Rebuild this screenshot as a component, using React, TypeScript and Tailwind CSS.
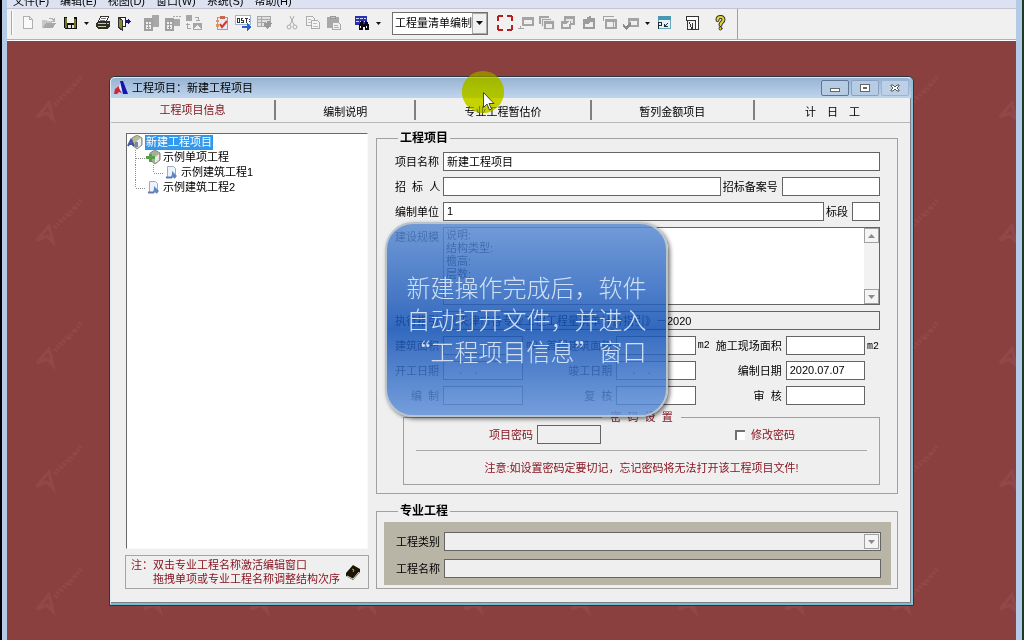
import type { ReactNode } from "react";

const menuItems = ["文件(F)", "编辑(E)", "视图(D)", "窗口(W)", "系统(S)", "帮助(H)"];

const inputClass =
  "block h-[19px] w-full min-w-0 rounded-none border border-[#646464] bg-white px-[3px] pb-[2px] text-[11px] leading-[15px] text-black outline-none";
const disabledClass =
  "block h-[19px] w-full min-w-0 rounded-none border border-[#646464] bg-[#efefef] px-[3px] pb-[2px] text-[11px] leading-[15px] text-black outline-none";

/* ---------- Toolbar icons ---------- */

const Icon = ({ children }: { children: ReactNode }) => (
  <svg width="16" height="16" viewBox="0 0 16 16" fill="none" shapeRendering="crispEdges">
    {children}
  </svg>
);

const NewIcon = () => (
  <Icon>
    <path d="M3.5 1.5h6l3 3v9h-9z" fill="#fafafa" stroke="#b0b0b0" />
    <path d="M9.5 1.5v3h3" stroke="#b0b0b0" />
  </Icon>
);

const OpenIcon = () => (
  <Icon>
    <path d="M1 5h4l1 1h5v2H5l-3 5H1z" fill="#c8c8c8" />
    <path d="M2 13l3-5h10l-3 5z" fill="#a8a8a8" />
    <path d="M8 3.5h3l2 2M13 3v3h-3" stroke="#b0b0b0" />
  </Icon>
);

const SaveIcon = () => (
  <Icon>
    <path d="M2 2h13v12H3l-1-1z" fill="#111" />
    <path d="M3 3h2v10H3zM12 4h2v9h-2z" fill="#767628" />
    <path d="M5 2h7v6H5z" fill="#f4f4ec" />
    <path d="M6 10h3v3H6zM10 10h2v3h-2z" fill="#e4e4e4" />
  </Icon>
);

const PrintIcon = () => (
  <Icon>
    <path d="M5.5 1.5h8l-2 5h-8z" fill="#fff" stroke="#333" />
    <path d="M6 3.5h5M5 5.5h5" stroke="#777" />
    <path d="M1 8l3-2h10l1 1v4l-3 3H3l-2-2z" fill="#2c2c24" />
    <path d="M3 8.500h8M3 11.500h8" stroke="#c8c8a4" />
    <path d="M12 8h2v1h-2z" fill="#d8d020" />
  </Icon>
);

const ExitIcon = () => (
  <Icon>
    <path d="M2.500 2.500h7v9H6" stroke="#222" fill="#fff" />
    <path d="M2 2l4 3v10l-4-3z" fill="#8c8c28" stroke="#333" />
    <path d="M10 5h2V3l3 3.500-3 3.500V8h-2z" fill="#181878" />
  </Icon>
);

const TreeOffIcon = ({ dotted }: { dotted?: boolean }) => (
  <Icon>
    {dotted ? (
      <path d="M8 1h2v1H8zM11 1h2v1h-2zM14 1h2v1h-2zM7 4h8v7H7z" fill="#a8a8a8" />
    ) : (
      <path d="M8 0h7v12H8z" fill="#a8a8a8" />
    )}
    <path d="M0 3h9v13H0z" fill="#a0a0a0" />
    <path d="M2 7h5v7H2z" fill="#efefef" />
    <path d="M2 9.500h5M4.500 7v7M3 12.500h3" stroke="#a0a0a0" />
  </Icon>
);

const SwapIcon = () => (
  <Icon>
    <path d="M0 0h6v6H0zM7 8h9v7H7z" fill="#a6a6a6" />
    <path d="M9 2.500h3v3M10 5.500h4M1.500 8v5h3M0 9.500h4" stroke="#a6a6a6" />
    <path d="M8 14l3-4 2 2 1-1 1 3H8z" fill="#efefef" />
  </Icon>
);

const CheckListIcon = () => (
  <Icon>
    <path d="M3.500 2.500h10v12h-10z" fill="#e8e8f4" stroke="#9c9cac" />
    <path d="M6 1h5v3H6z" fill="#c86848" />
    <path d="M2 5h3v2H2zM2 9h3v3H2z" fill="#d89860" />
    <path d="M6 9l2 3 5-6" stroke="#d83828" strokeWidth="2" shapeRendering="auto" />
  </Icon>
);

const CodeIcon = () => (
  <Icon>
    <path d="M.5.500h15v9H.500z" fill="#fff" stroke="#9cb4d8" />
    <path d="M2.500 3v5M2 3.500h2v4H2M8 3.500H6.500v2H8v2H6M10 3.500h3M11.500 3v5M14.500 4v1M14.500 6v1" stroke="#333" />
    <path d="M7 11h5V8l4 4-4 4v-3H7z" fill="#2a62c8" />
  </Icon>
);

const SheetOffIcon = () => (
  <Icon>
    <path d="M1.500 1.500h13v10h-13z" fill="#e0e0e0" stroke="#a8a8a8" />
    <path d="M2 4.500h12M2 7.500h8M5.500 2v9" stroke="#a8a8a8" />
    <path d="M8 8h3V6h3v2h2l-4 6-4-3z" fill="#989898" />
  </Icon>
);

const CutIcon = () => (
  <Icon>
    <g stroke="#acacac" shapeRendering="auto">
      <path d="M6 1l4 9M10 1L6 10" />
      <circle cx="5" cy="12" r="2" />
      <circle cx="11" cy="12" r="2" />
    </g>
  </Icon>
);

const CopyIcon = () => (
  <Icon>
    <path d="M1.500 1.500h6l2 2v7h-8z" fill="#f4f4f4" stroke="#acacac" />
    <path d="M6.500 5.500h6l2 2v6h-8z" fill="#f4f4f4" stroke="#acacac" />
    <path d="M3 4.500h3M3 7.500h3M8 8.500h4M8 11.500h5" stroke="#bcbcbc" />
  </Icon>
);

const PasteIcon = () => (
  <Icon>
    <path d="M1 2h12v11H1z" fill="#a8a8a8" />
    <path d="M4.500 1.500h5v2h-5z" fill="#c4c4c4" stroke="#989898" />
    <path d="M6.500 7.500h6l2 2v5h-8z" fill="#f0f0f0" stroke="#a8a8a8" />
    <path d="M8 10.500h4M8 12.500h5" stroke="#b0b0b0" />
  </Icon>
);

const FindIcon = () => (
  <Icon>
    <path d="M1 1h12v9H1z" fill="#2a30ac" />
    <path d="M2 3.500h10M2 6.500h10" stroke="#d4d8f4" strokeDasharray="3 1" />
    <path d="M5 15v-5l2-4h2v3h2V6h2l2 4v5h-4v-3h-2v3z" fill="#0a0a14" />
    <path d="M6 11h1v2H6zM12 11h1v2h-1z" fill="#eee" />
  </Icon>
);

const FullScreenIcon = () => (
  <Icon>
    <path d="M1 6V2l1-1h4M10 1h4l1 1v4M15 10v4l-1 1h-4M6 15H2l-1-1v-4" stroke="#b42020" strokeWidth="2" />
  </Icon>
);

const WindowOffIcon = ({ variant }: { variant: string }) => (
  <Icon>
    {variant === "down" && (
      <>
        <path d="M4 2h12v9H4zM0 13h6v1H0zM2 11h1v3H2z" fill="#a4a4a4" />
        <path d="M6 5h8v4H6z" fill="#efefef" />
      </>
    )}
    {variant === "stack" && (
      <>
        <path d="M0 1h10v8H0z" fill="#a4a4a4" />
        <path d="M2.500 3.500h10v8h-10z" fill="#a4a4a4" stroke="#e8e8e8" />
        <path d="M4.500 5.500h11v9h-11z" fill="#a4a4a4" stroke="#e8e8e8" />
        <path d="M7 9h6v4H7z" fill="#efefef" />
      </>
    )}
    {variant === "pair" && (
      <>
        <path d="M4 1h11v9H4z" fill="#a4a4a4" />
        <path d="M6 4h7v4H6z" fill="#e4e4e4" />
        <path d="M1 6h10v8H1z" fill="#a4a4a4" />
        <path d="M3 9h6v3H3zM6 9l4-4v4z" fill="#efefef" />
      </>
    )}
    {variant === "paste" && (
      <>
        <path d="M2 4h4V2l4-1v2h4v11H2z" fill="#9c9c9c" />
        <path d="M4 9h3l2-2h3v5H4z" fill="#efefef" />
      </>
    )}
    {variant === "up" && (
      <>
        <path d="M3 4h12v10H3zM1 1h11v1H2v4H1z" fill="#a4a4a4" />
        <path d="M5 7h6v5H5zM12 7h1v5h-1z" fill="#efefef" />
      </>
    )}
    {variant === "check" && (
      <>
        <path d="M5 3h11v9H5z" fill="#a4a4a4" />
        <path d="M7 6h7v4H7z" fill="#efefef" />
        <path d="M0 9l3 2 5-4v3l-5 5-3-3z" fill="#8c8c8c" />
      </>
    )}
  </Icon>
);

const PanelIcon = () => (
  <Icon>
    <path d="M2.500 1.500h12v12h-12z" fill="#e4f0f4" stroke="#6ca8bc" />
    <path d="M2 1h13v4H2z" fill="#4898b4" />
    <path d="M2.500 14V7.500h3v3h-3M8 12l4-4M8.500 9v2.500h3" stroke="#1c2c38" />
  </Icon>
);

const LayoutIcon = () => (
  <Icon>
    <path d="M2.500 1.500h12v13h-3v-9h-9z" fill="#fff" stroke="#333" />
    <path d="M3.500 6v8M5 7l3 7M8.500 8v6M3 14.500h9" stroke="#333" />
  </Icon>
);

const HelpIcon = () => (
  <Icon>
    <g shapeRendering="auto" strokeLinecap="round">
      <path d="M5.500 5c0-4 6-4 6-.5C11.500 7 8.500 7 8.500 10" stroke="#333" strokeWidth="4" />
      <circle cx="8.500" cy="13.500" r="1.500" fill="#ece030" stroke="#333" />
      <path d="M5.500 5c0-4 6-4 6-.5C11.500 7 8.500 7 8.500 10" stroke="#e4d830" strokeWidth="2" />
    </g>
  </Icon>
);

const ToolButton = ({ label, children }: { label: string; children: ReactNode }) => (
  <button type="button" aria-label={label} className="flex h-6 w-[21px] shrink-0 items-center justify-center">
    {children}
  </button>
);

const DropButton = ({ label }: { label: string }) => (
  <button type="button" aria-label={label} className="flex h-6 w-3 shrink-0 items-center justify-center">
    <svg width="5" height="3" viewBox="0 0 5 3">
      <path d="M0 0h5L2.500 3z" fill="#111" />
    </svg>
  </button>
);

const Gap = () => <span className="w-[7px] shrink-0" />;

const Toolbar = () => (
  <div className="flex h-8 items-center border-y border-t-[#c4c4cc] border-b-[#b8b0b0] bg-[#f0f0f0] pb-[2px]">
    <div className="-mb-[2px] flex h-[30px] items-center border-r border-[#a0a0a0] pb-[2px] pr-[7px]">
      <span className="ml-1 mr-1 h-6 w-[2px] border-l border-[#b0a8a0] bg-white" />
      <ToolButton label="新建"><NewIcon /></ToolButton>
      <ToolButton label="打开"><OpenIcon /></ToolButton>
      <ToolButton label="保存"><SaveIcon /></ToolButton>
      <DropButton label="保存选项" />
      <ToolButton label="打印"><PrintIcon /></ToolButton>
      <ToolButton label="退出"><ExitIcon /></ToolButton>
      <Gap />
      <ToolButton label="单项"><TreeOffIcon /></ToolButton>
      <ToolButton label="专业"><TreeOffIcon dotted /></ToolButton>
      <ToolButton label="转换"><SwapIcon /></ToolButton>
      <Gap />
      <ToolButton label="检查"><CheckListIcon /></ToolButton>
      <ToolButton label="导出"><CodeIcon /></ToolButton>
      <ToolButton label="导入"><SheetOffIcon /></ToolButton>
      <Gap />
      <ToolButton label="剪切"><CutIcon /></ToolButton>
      <ToolButton label="复制"><CopyIcon /></ToolButton>
      <ToolButton label="粘贴"><PasteIcon /></ToolButton>
      <Gap />
      <ToolButton label="查找"><FindIcon /></ToolButton>
      <DropButton label="查找选项" />
      <div className="relative ml-2 mr-[6px] w-24 shrink-0">
        <select
          aria-label="编制类型"
          className="block h-[23px] w-full appearance-none rounded-none border border-[#707070] bg-white pl-[2px] text-[11px] leading-4 text-black"
        >
          <option>工程量清单编制</option>
        </select>
        <span className="pointer-events-none absolute right-px top-px flex h-[21px] w-[15px] items-center justify-center border border-[#a8a8a8] bg-[#f0f0f0]">
          <svg width="7" height="4" viewBox="0 0 7 4">
            <path d="M0 0h7L3.500 4z" fill="#111" />
          </svg>
        </span>
      </div>
      <ToolButton label="全屏"><FullScreenIcon /></ToolButton>
      <ToolButton label="插入"><WindowOffIcon variant="down" /></ToolButton>
      <ToolButton label="层叠"><WindowOffIcon variant="stack" /></ToolButton>
      <ToolButton label="平铺"><WindowOffIcon variant="pair" /></ToolButton>
      <ToolButton label="粘贴窗口"><WindowOffIcon variant="paste" /></ToolButton>
      <ToolButton label="上移"><WindowOffIcon variant="up" /></ToolButton>
      <ToolButton label="确认"><WindowOffIcon variant="check" /></ToolButton>
      <DropButton label="窗口选项" />
      <ToolButton label="面板"><PanelIcon /></ToolButton>
      <Gap />
      <ToolButton label="版式"><LayoutIcon /></ToolButton>
      <Gap />
      <ToolButton label="帮助"><HelpIcon /></ToolButton>
    </div>
  </div>
);

/* ---------- Dialog ---------- */

const LogoIcon = () => (
  <svg width="14" height="14" viewBox="0 0 14 14">
    <path d="M6 0h3l5 13H9z" fill="#1414b4" />
    <path d="M1 8l4-3 1 4 2 3-3-1-2 2H0z" fill="#d02838" />
    <path d="M6 2l2 9-3-4z" fill="#f4f4f8" />
  </svg>
);

const TitleBar = () => (
  <div className="flex h-5 items-center rounded-t-[4px] bg-linear-to-b from-[#98b3d2] to-[#bfd5ee] pl-[3px] pr-[2px]">
    <LogoIcon />
    <h1 className="ml-1 flex-1 text-[11px] leading-4 text-black">工程项目：新建工程项目</h1>
    <div className="flex gap-[2px]">
      <button type="button" aria-label="最小化" className="flex h-4 w-7 items-center justify-center rounded-[2px] border border-[#5f7692] bg-[#b6cce4]">
        <span className="mt-1 h-1 w-[10px] border border-[#666] bg-white" />
      </button>
      <button type="button" aria-label="最大化" className="flex h-4 w-7 items-center justify-center rounded-[2px] border border-[#8aa2c0] bg-[#b6cce4]">
        <span className="flex h-2 w-[10px] items-center justify-center border border-[#666] bg-white">
          <span className="h-[2px] w-1 border border-[#666]" />
        </span>
      </button>
      <button type="button" aria-label="关闭" className="flex h-4 w-7 items-center justify-center rounded-[2px] border border-[#9db4d0] bg-[#bcd0e8]">
        <svg width="10" height="8" viewBox="0 0 10 8">
          <path d="M1 1h2l2 2 2-2h2v1L7 4l2 2v1H7L5 5 3 7H1V6l2-2-2-2z" stroke="#555" fill="#fff" />
        </svg>
      </button>
    </div>
  </div>
);

const tabs = ["工程项目信息", "编制说明", "专业工程暂估价", "暂列金额项目", "计　日　工"];

const Tabs = () => (
  <div
    role="tablist"
    className="grid h-[25px] grid-cols-[165fr_140fr_175fr_163fr_155fr] border-b border-[#b8b8b8] bg-[#f0f0f0] py-[2px] text-[11px] leading-4"
  >
    {tabs.map((tab, i) => (
      <button
        key={tab}
        type="button"
        role="tab"
        aria-selected={i === 0}
        className={
          i === 0
            ? "border-r-2 border-[#808080] text-[#7c1018]"
            : "border-r-2 border-[#808080] pt-1 text-black last:border-r-0"
        }
      >
        {tab}
      </button>
    ))}
  </div>
);

const Connector = ({ kind }: { kind: "tee" | "elbow" | "pipe" }) => (
  <svg width="18" height="15" viewBox="0 0 18 15" className="shrink-0" shapeRendering="crispEdges">
    <path
      d={kind === "elbow" ? "M8.500 0v8M8.500 8.500h9" : kind === "tee" ? "M8.500 0v15M8.500 8.500h9" : "M8.500 0v15"}
      stroke="#909090"
      strokeDasharray="1 1"
      fill="none"
    />
  </svg>
);

const ProjectIcon = () => (
  <svg width="16" height="15" viewBox="0 0 16 15" className="shrink-0">
    <path d="M5 3l5-3 5 3v7l-5 4-5-4z" fill="#b8bc90" stroke="#848c88" />
    <path d="M10 6l4-3v7l-4 3z" fill="#eef0ea" />
    <path d="M1 11l3-6 3 6M2 9h4" stroke="#4454a4" strokeWidth="2" fill="none" />
    <path d="M8 7h3v5H8z" fill="#7884c0" />
  </svg>
);

const UnitIcon = () => (
  <svg width="16" height="15" viewBox="0 0 16 15" className="shrink-0">
    <path d="M5 3l5-3 5 3v7l-5 4-5-4z" fill="#a8b098" stroke="#808880" />
    <path d="M10 7l4-3v6l-4 3z" fill="#e8ece4" />
    <path d="M1 6h3V4h3v2h3v3H7v3H4V9H1z" fill="#58a048" />
  </svg>
);

const DocIcon = () => (
  <svg width="16" height="15" viewBox="0 0 16 15" className="shrink-0">
    <path d="M4.500 1.500h6l2 2v9h-8z" fill="#eef2fa" stroke="#9cacc8" />
    <path d="M9 9V6l5 5-3 3v-2H8z" fill="#5c88c8" />
    <path d="M3 12.500h6" stroke="#6478ac" strokeWidth="2" />
  </svg>
);

const Tree = () => (
  <ul
    role="tree"
    className="flex-1 border border-l-[#696969] border-t-[#696969] border-r-[#fafafa] border-b-[#fafafa] bg-white pt-px text-[11px] leading-[15px]"
  >
    <li role="treeitem" className="flex h-[15px] items-center">
      <ProjectIcon />
      <span className="ml-[2px] bg-[#3399ee] px-px text-white outline-1 -outline-offset-1 outline-dotted outline-[#c86820]">
        新建工程项目
      </span>
    </li>
    <li role="treeitem" className="flex h-[15px] items-center">
      <Connector kind="tee" />
      <UnitIcon />
      <span className="ml-[2px]">示例单项工程</span>
    </li>
    <li role="treeitem" className="flex h-[15px] items-center">
      <Connector kind="pipe" />
      <Connector kind="elbow" />
      <DocIcon />
      <span className="ml-[2px]">示例建筑工程1</span>
    </li>
    <li role="treeitem" className="flex h-[15px] items-center">
      <Connector kind="elbow" />
      <DocIcon />
      <span className="ml-[2px]">示例建筑工程2</span>
    </li>
  </ul>
);

const BookIcon = () => (
  <svg width="16" height="16" viewBox="0 0 16 16" className="shrink-0">
    <path d="M1 9l7-8 7 4v3l-7 8-7-4z" fill="#1c1408" />
    <path d="M2 12l6 3 6-7" stroke="#e8e0c8" fill="none" />
    <path d="M7 5l2 1-1 2" stroke="#d8a820" fill="none" />
  </svg>
);

const LeftColumn = () => (
  <div className="flex w-[244px] shrink-0 flex-col gap-[6px] pt-[10px]">
    <div className="flex flex-1 px-px">
      <Tree />
    </div>
    <div className="flex h-[34px] items-center justify-between border border-[#a4a4a4] pl-[5px] pr-[7px] text-[11px] leading-[14px] text-[#84101c]">
      <p className="flex whitespace-nowrap">
        <span>注：</span>
        <span>
          双击专业工程名称激活编辑窗口
          <br />
          拖拽单项或专业工程名称调整结构次序
        </span>
      </p>
      <BookIcon />
    </div>
  </div>
);

const Label = ({ htmlFor, children }: { htmlFor: string; children: ReactNode }) => (
  <label htmlFor={htmlFor} className="shrink-0 whitespace-pre pr-1 text-right">
    {children}
  </label>
);

const Unit = ({ children }: { children: ReactNode }) => (
  <span className="font-['Liberation_Mono',monospace] text-[10px]">{children}</span>
);

const ScrollArrow = ({ up }: { up?: boolean }) => (
  <span className="flex h-[15px] items-center justify-center border border-[#a0a0a0] bg-[#f4f4f4]">
    <svg width="7" height="4" viewBox="0 0 7 4">
      <path d={up ? "M0 4h7L3.500 0z" : "M0 0h7L3.500 4z"} fill="#8c8c8c" />
    </svg>
  </span>
);

const detailRows = [
  [
    { id: "area", label: "建筑面积", value: "", unit: "m2" },
    { id: "first-area", label: "首层建筑面积", value: "", unit: "m2" },
    { id: "site-area", label: "施工现场面积", value: "", unit: "m2" },
  ],
  [
    { id: "start", label: "开工日期", value: "    .    .", unit: "" },
    { id: "finish", label: "竣工日期", value: "    .    .", unit: "" },
    { id: "made", label: "编制日期", value: "2020.07.07", unit: "" },
  ],
  [
    { id: "author", label: "编  制", value: "", unit: "" },
    { id: "review", label: "复  核", value: "", unit: "" },
    { id: "audit", label: "审  核", value: "", unit: "" },
  ],
];

const ProjectFieldset = () => (
  <fieldset className="min-w-0 border border-[#a0a0a0] pb-2 pl-[18px] pr-[17px]">
    <legend className="ml-[3px] h-[14px] px-[2px] text-[12px] font-bold leading-[14px]">工程项目</legend>
    <div className="flex flex-col gap-[6px] pt-[7px]">
      <div className="grid grid-cols-[48px_1fr] items-center">
        <Label htmlFor="name">项目名称</Label>
        <input id="name" className={inputClass} defaultValue="新建工程项目" />
      </div>
      <div className="grid grid-cols-[48px_277fr_61px_98fr] items-center">
        <Label htmlFor="bidder">招  标  人</Label>
        <input id="bidder" className={inputClass} />
        <Label htmlFor="record">招标备案号</Label>
        <input id="record" className={inputClass} />
      </div>
      <div className="grid grid-cols-[48px_1fr_28px_28px] items-center">
        <Label htmlFor="unit">编制单位</Label>
        <input id="unit" className={inputClass} defaultValue="1" />
        <Label htmlFor="section">标段</Label>
        <input id="section" className={inputClass} />
      </div>
      <div className="grid h-[78px] grid-cols-[48px_1fr]">
        <div className="pt-[2px] text-right">
          <Label htmlFor="scale">建设规模</Label>
        </div>
        <div className="flex border border-[#646464] bg-white">
          <textarea
            id="scale"
            className="flex-1 resize-none overflow-hidden px-[2px] py-px text-[11px] leading-[13px] outline-none"
            defaultValue={"说明:\n结构类型:\n檐高:\n层数:"}
          />
          <div className="flex w-[15px] flex-col justify-between bg-[#f2f2f2]">
            <ScrollArrow up />
            <ScrollArrow />
          </div>
        </div>
      </div>
      <div className="grid grid-cols-[48px_1fr] items-center">
        <Label htmlFor="standard">执行指引</Label>
        <input id="standard" readOnly className={disabledClass} defaultValue="《天津市各专业工程工程量清单计价指引》－2020" />
      </div>
      {detailRows.map(([left, middle, right]) => (
        <div key={left.id} className="grid grid-cols-[48px_80fr_93px_79fr_90px_79fr_15px] items-center">
          <Label htmlFor={left.id}>{left.label}</Label>
          <input id={left.id} className={inputClass} defaultValue={left.value} />
          <div className="flex items-center justify-between pl-[3px]">
            <Unit>{left.unit}</Unit>
            <Label htmlFor={middle.id}>{middle.label}</Label>
          </div>
          <input id={middle.id} className={inputClass} defaultValue={middle.value} />
          <div className="flex items-center justify-between pl-[2px]">
            <Unit>{middle.unit}</Unit>
            <Label htmlFor={right.id}>{right.label}</Label>
          </div>
          <input id={right.id} className={inputClass} defaultValue={right.value} />
          <span className="pl-[2px]">
            <Unit>{right.unit}</Unit>
          </span>
        </div>
      ))}

      {/* Password */}
      <fieldset className="ml-2 h-[74px] min-w-0 border border-[#a0a0a0] px-3 text-[#84101c]">
        <legend className="mx-auto h-3 whitespace-pre px-[8px] text-[11px] leading-3">密  码  设  置</legend>
        <div className="flex items-center pl-[73px] pr-[72px] pt-[2px]">
          <Label htmlFor="password">项目密码</Label>
          <div className="w-16">
            <input id="password" type="password" disabled className={disabledClass} />
          </div>
          <label className="ml-auto flex items-center gap-[6px]">
            <input
              type="checkbox"
              className="size-[10px] appearance-none border-l-2 border-t-2 border-[#707070] bg-white"
            />
            修改密码
          </label>
        </div>
        <hr className="mt-[6px] border-[#a8a8a8]" />
        <p className="mt-[9px] whitespace-nowrap text-center">
          注意:如设置密码定要切记，忘记密码将无法打开该工程项目文件!
        </p>
      </fieldset>
    </div>
  </fieldset>
);

const SpecialtyFieldset = () => (
  <fieldset className="mt-[10px] min-w-0 border border-[#a0a0a0] pb-[3px] pl-[7px] pr-[6px]">
    <legend className="ml-[14px] h-[14px] px-[2px] text-[12px] font-bold leading-[14px]">专业工程</legend>
    <div className="mt-1 flex flex-col gap-2 bg-[#b8b4a6] pb-[7px] pl-[12px] pr-[10px] pt-[10px]">
      <div className="grid grid-cols-[48px_1fr] items-center">
        <Label htmlFor="category">工程类别</Label>
        <div className="relative">
          <select
            id="category"
            disabled
            className="block h-[19px] w-full appearance-none rounded-none border border-[#646464] bg-[#efefef] opacity-100"
          />
          <span className="pointer-events-none absolute right-[2px] top-[2px] w-[15px]">
            <ScrollArrow />
          </span>
        </div>
      </div>
      <div className="grid grid-cols-[48px_1fr] items-center">
        <Label htmlFor="project">工程名称</Label>
        <input id="project" disabled className={disabledClass} />
      </div>
    </div>
  </fieldset>
);

const ProjectWindow = () => (
  <section className="rounded-t-[6px] border border-[#2c3440] bg-[#7cc4dc]">
    <div className="rounded-t-[5px] border-l border-r-2 border-t border-b-2 border-l-[#dfe9f5] border-r-[#8cc4dc] border-t-[#dfe9f5] border-b-[#6cc0d8] bg-[#efefef]">
      <TitleBar />
      <div className="border-b border-r border-[#808088]">
        <Tabs />
        <div className="flex gap-[7px] pb-[13px] pl-[14px] pr-3 text-[11px] leading-4">
          <LeftColumn />
          <div className="min-w-0 flex-1 pt-2">
            <ProjectFieldset />
            <SpecialtyFieldset />
          </div>
        </div>
      </div>
    </div>
  </section>
);

/* Faint brand marks on the workspace */
const Watermark = () => (
  <svg className="absolute inset-0 h-full w-full" aria-hidden="true">
    <defs>
      <pattern id="mark" x="22" y="30" width="107" height="123" patternUnits="userSpaceOnUse">
        <g stroke="#a86460" fill="none" opacity=".22">
          <path d="M8 46l12-14 4 16-6-6z" strokeWidth="3" />
          <path d="M26 34l6-8M32 28l8-10M40 22l6-10M46 14l6-8" strokeWidth="4" strokeDasharray="2 2" />
        </g>
      </pattern>
    </defs>
    <rect width="100%" height="100%" fill="url(#mark)" />
  </svg>
);

const App = () => {
  return (
    <div
      lang="zh-CN"
      className="flex min-h-screen flex-col overflow-hidden border-l-2 border-r-2 border-l-black border-r-[#1c3c28] bg-[#b4cbe8] pl-[5px] pr-[6px] font-['Liberation_Sans','Noto_Sans_CJK_SC',sans-serif] text-black"
    >
      <nav className="flex h-2 items-end gap-[11px] overflow-hidden bg-[#dce2f2] pl-[6px] text-[11px]">
        {menuItems.map((item) => (
          <a key={item} href="#" className="whitespace-nowrap leading-[14px]">
            {item}
          </a>
        ))}
      </nav>
      <Toolbar />
      <main className="relative flex-1 border-t border-white bg-[#8b4040] pb-[34px] pl-[102px] pr-[102px] pt-[35px]">
        <Watermark />
        <div className="relative">
          <ProjectWindow />
        </div>

        {/* Caption bubble */}
        <div className="absolute left-[378px] top-[181px] flex h-[195px] w-[283px] items-center justify-center rounded-[28px] border-2 border-[#b9c3cc] bg-linear-to-b from-[#598ad1]/85 via-[#1051b5]/85 via-55% to-[#5f90d8]/85 pb-[2px] shadow-[2px_2px_4px_rgba(0,0,0,0.55)]">
          <p className="whitespace-nowrap font-['Noto_Sans_CJK_SC',sans-serif] text-[24px] font-light leading-8 text-[#cfe0f4]">
            新建操作完成后，软件
            <br />
            自动打开文件，并进入
            <br />
            “工程项目信息”窗口
          </p>
        </div>

        {/* Pointer with click highlight */}
        <div className="absolute left-[455px] top-[30px] size-[42px] rounded-full bg-[#d4e000] mix-blend-multiply" />
        <div className="absolute left-[455px] top-[30px] size-[42px] rounded-full bg-[#c4d200]/50" />
        <svg className="absolute left-[476px] top-[51px]" width="12" height="19" viewBox="0 0 12 19">
          <path d="M.5.500v15l3.500-3.500 2.500 6 2-1-2.500-5.500H11z" fill="#fff" stroke="#444" />
        </svg>
      </main>
    </div>
  );
};

export default App;
